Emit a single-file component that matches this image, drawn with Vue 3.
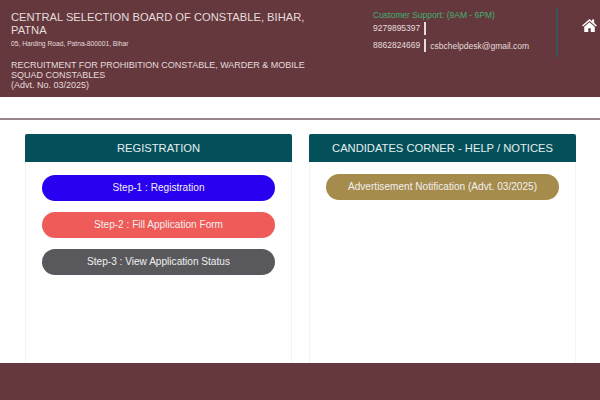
<template>
  <div class="page">
    <header class="top">
      <div class="org">
        <h1>CENTRAL SELECTION BOARD OF CONSTABLE, BIHAR, PATNA</h1>
        <p class="addr">05, Harding Road, Patna-800001, Bihar</p>
        <p class="recruit">RECRUITMENT FOR PROHIBITION CONSTABLE, WARDER &amp; MOBILE SQUAD CONSTABLES<br />(Advt. No. 03/2025)</p>
      </div>
      <div class="support">
        <div class="support-title">Customer Support: (9AM - 6PM)</div>
        <div class="phone-row"><span class="sep">9279895397</span></div>
        <div class="phone-row"><span class="sep">8862824669</span><span class="mail">csbchelpdesk@gmail.com</span></div>
      </div>
      <div class="home">
        <svg viewBox="0 0 24 21" width="15" height="13">
          <path d="M12 0 0 10.6l1.5 1.7L12 3.2l10.5 9.1 1.5-1.7-4.5-4V1h-3.4v2.6z" fill="#fff" />
          <path d="M12 5.2 3.5 12.6V21h6.5v-6h4v6h6.5v-8.4z" fill="#fff" />
        </svg>
      </div>
    </header>

    <div class="gap"></div>

    <main class="content">
      <section class="card" v-for="card in cards" :key="card.title">
        <div class="card-head">{{ card.title }}</div>
        <div class="card-body">
          <a v-for="link in card.links" :key="link.text" class="pill" :class="link.cls">{{ link.text }}</a>
        </div>
      </section>
    </main>

    <footer class="bottom"></footer>
  </div>
</template>

<script setup>
const cards = [
  {
    title: 'REGISTRATION',
    links: [
      { text: 'Step-1 : Registration', cls: 'blue' },
      { text: 'Step-2 : Fill Application Form', cls: 'red' },
      { text: 'Step-3 : View Application Status', cls: 'grey' }
    ]
  },
  {
    title: 'CANDIDATES CORNER - HELP / NOTICES',
    links: [{ text: 'Advertisement Notification (Advt. 03/2025)', cls: 'gold' }]
  }
]
</script>

<style>
html,
body {
  margin: 0;
  background: #fff;
}
</style>

<style scoped>
.page {
  width: 600px;
  height: 400px;
  overflow: hidden;
  display: flex;
  flex-direction: column;
  font-family: "Liberation Sans", Arial, sans-serif;
  background: #fff;
}

.top {
  height: 97px;
  flex: none;
  display: flex;
  background: #65383e;
  color: #e4dcdc;
}

.org {
  width: 373px;
  flex: none;
  box-sizing: border-box;
  padding: 11px 50px 0 11px;
}

h1 {
  margin: 0;
  font-size: 11.2px;
  line-height: 13px;
  font-weight: 400;
}

.addr {
  margin: 2px 0 0;
  font-size: 6.7px;
  line-height: 9px;
}

.recruit {
  margin: 12px 0 0;
  font-size: 9px;
  line-height: 10px;
}

.support {
  width: 183px;
  flex: none;
  box-sizing: border-box;
  padding-top: 10px;
  font-size: 8.5px;
}

.support-title {
  color: #3fb070;
  line-height: 11px;
}

.phone-row {
  display: flex;
  align-items: center;
  height: 13px;
  margin: 1px 0 4px;
}

.sep {
  padding-right: 4px;
  border-right: 2px solid #e4dcdc;
  line-height: 13px;
}

.mail {
  margin-left: 4px;
}

.home {
  flex: 1;
  margin-top: 8px;
  height: 49px;
  border-left: 2px solid #3b5560;
  box-sizing: border-box;
  padding: 10px 0 0 24px;
}

.gap {
  height: 21px;
  flex: none;
  border-bottom: 2px solid #9a838b;
}

.content {
  flex: 1;
  min-height: 0;
  display: flex;
  gap: 17px;
  padding: 14px 24px 0 25px;
}

.card {
  flex: 1;
  display: flex;
  flex-direction: column;
  border: solid #f3f3f3;
  border-width: 0 1px;
}

.card-head {
  height: 28px;
  flex: none;
  margin: 0 -1px;
  border-radius: 2px 2px 0 0;
  background: #04505a;
  color: #e4efef;
  font-size: 11.2px;
  line-height: 28px;
  text-align: center;
}

.card-body {
  flex: 1;
  display: flex;
  flex-direction: column;
  gap: 11px;
  padding: 13px 16px 0;
}

.card:last-child .card-body {
  padding-top: 12px;
}

.pill {
  height: 26px;
  border-radius: 13px;
  font-size: 10.1px;
  line-height: 26px;
  text-align: center;
  color: #f0f0f0;
}

.blue {
  background: #2a00f0;
}

.red {
  background: #ef5b58;
}

.grey {
  background: #59595d;
}

.gold {
  background: #a68c4c;
}

.bottom {
  height: 37px;
  flex: none;
  background: #65383e;
}
</style>
